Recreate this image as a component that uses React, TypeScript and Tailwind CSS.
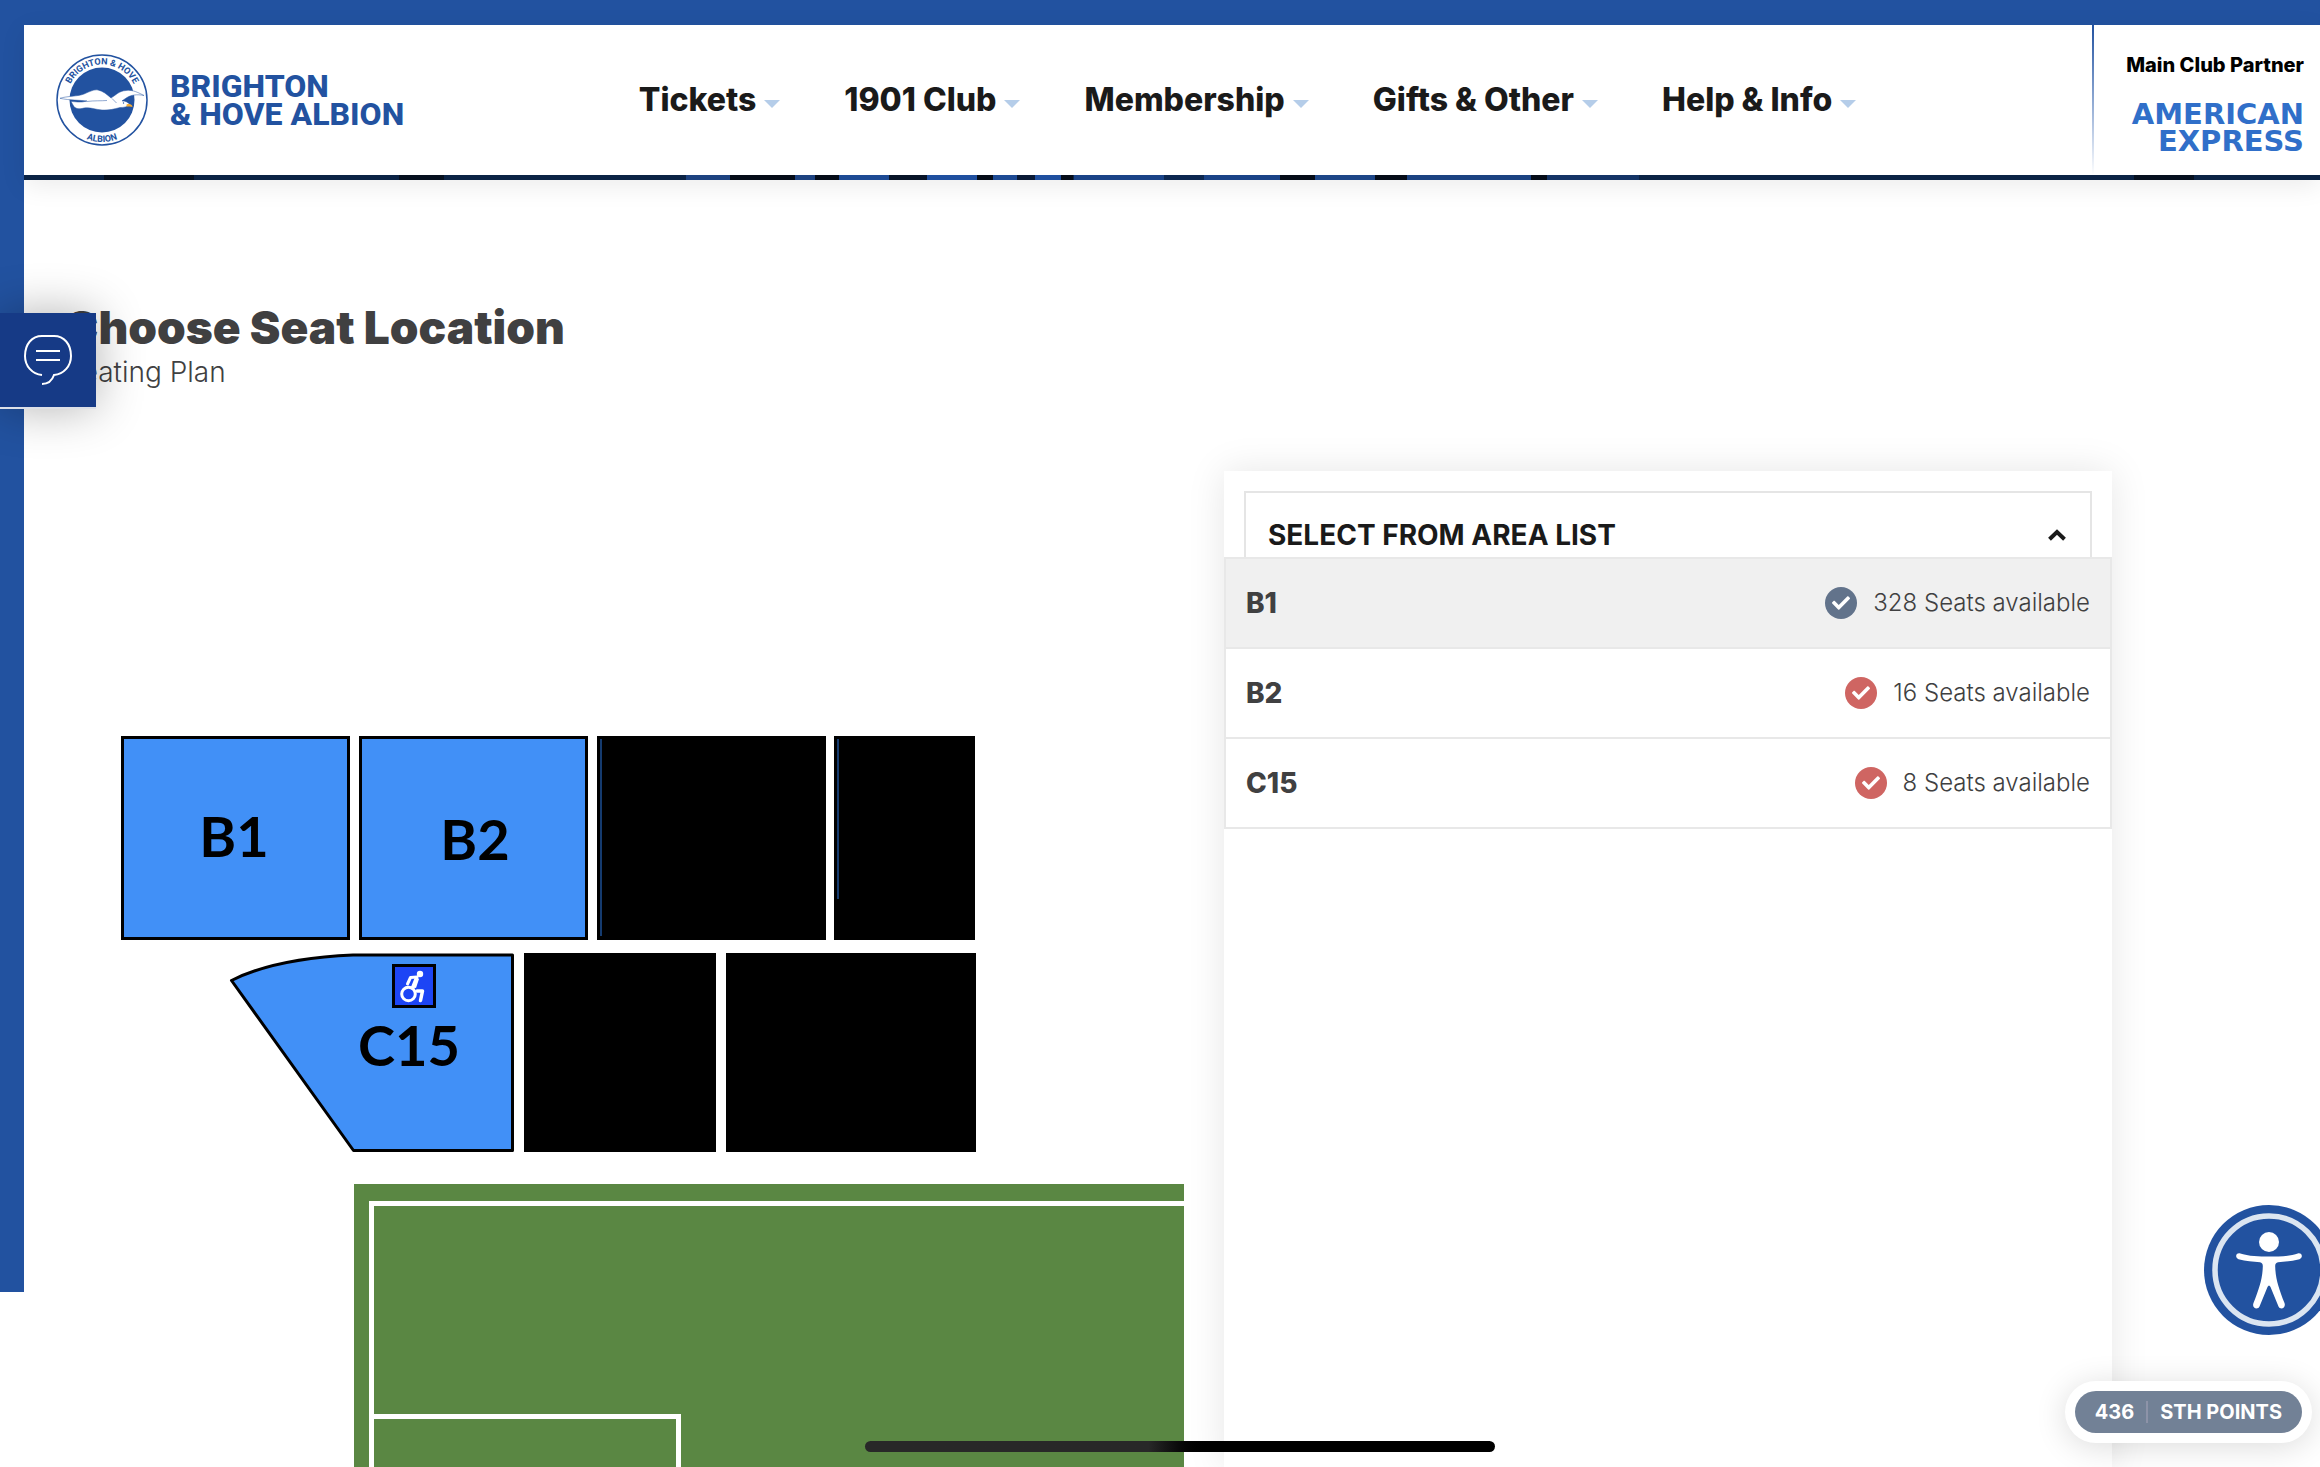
import { useState } from "react";
import { FaCheck } from "react-icons/fa";
import clsx from "clsx";

const NAV = ["Tickets", "1901 Club", "Membership", "Gifts & Other", "Help & Info"];

const AREAS = [
  { id: "B1", seats: 328, low: false },
  { id: "B2", seats: 16, low: true },
  { id: "C15", seats: 8, low: true }
];

// [x, width, fill] patches of the hero photo that show under the header
const HERO: [number, number, string][] = [
  [80, 90, "#06101f"],
  [375, 45, "#06101f"],
  [662, 44, "#1d4280"],
  [706, 65, "#050c18"],
  [771, 20, "#1d4280"],
  [791, 24, "#050c18"],
  [815, 50, "#1d4a94"],
  [865, 38, "#081428"],
  [903, 50, "#1f4f9f"],
  [953, 16, "#050c18"],
  [969, 24, "#1d4a94"],
  [993, 18, "#0a1a36"],
  [1011, 26, "#1f4f9f"],
  [1037, 12, "#050c18"],
  [1050, 90, "#1a4387"],
  [1140, 40, "#0c2750"],
  [1180, 76, "#1a4387"],
  [1256, 35, "#050c18"],
  [1291, 60, "#1d4687"],
  [1351, 32, "#050c18"],
  [1383, 124, "#1b4281"],
  [1507, 16, "#050c18"],
  [1523, 92, "#143466"],
  [2110, 60, "#06101f"]
];

function Crest() {
  return (
    <svg viewBox="0 0 92 92" className="size-[92px] shrink-0" aria-hidden="true">
      <circle cx="46" cy="46" r="45" fill="#fff" stroke="#2252a0" strokeWidth="1.5" />
      <circle cx="46" cy="46" r="32.5" fill="#2252a0" />
      <path id="crest-top" d="M10.500 46a35.500 35.500 0 0 1 71 0" fill="none" />
      <path id="crest-bottom" d="M4 46a42 42 0 0 0 84 0" fill="none" />
      <text fill="#2252a0" fontFamily="Roboto, sans-serif" fontWeight="700" fontSize="9" textAnchor="middle">
        <textPath href="#crest-top" startOffset="50%">BRIGHTON &amp; HOVE</textPath>
      </text>
      <text fill="#2252a0" fontFamily="Roboto, sans-serif" fontWeight="700" fontSize="9" textAnchor="middle">
        <textPath href="#crest-bottom" startOffset="50%">ALBION</textPath>
      </text>
      <path
        d="M4 44.300C11 42 22 42.500 28 40C34 37.500 38 35.300 42 36C47 37 51 40.500 55 44C60 41 63 37 70 36.500C77 35.500 83 39 88 41.500C81 40 75 41 71 43.500C68 45.500 67 46 66 47C69 46.500 72 48.500 74 50.500C71 53 68 53.500 64 53.500C58 55 53 56.500 46 56C39 55.500 34 53 28 54C23 55.500 19 55 17 51L15 47.500C19 47.500 25 49 31 47C24 46 14 46.500 4 44.300Z"
        fill="#fff"
        stroke="#2252a0"
        strokeWidth=".5"
      />
      <path d="M56 44.500l4.500 4.500M31 47.500c7-1 14-.5 20-1" stroke="#2252a0" strokeWidth=".5" fill="none" />
      <circle cx="67.500" cy="49" r=".7" fill="#2252a0" />
      <path d="M70.500 50.500c3-1 5.500-.5 6 2.500-2-.5-4-.3-6-.6z" fill="#f4ab33" />
    </svg>
  );
}

function Header() {
  return (
    <header className="relative shadow-[0_6px_24px_rgba(0,0,0,0.08)]">
      <div className="flex h-[150px] bg-white">
        <a href="#" className="flex w-[379px] items-center gap-[22px] pl-8 text-[#2252a0]">
          <Crest />
          <span className="whitespace-nowrap font-['Roboto',sans-serif] text-[32px] font-extrabold leading-7">
            BRIGHTON
            <br />& HOVE ALBION
          </span>
        </a>
        <nav className="flex flex-1 items-center justify-center gap-16">
          {NAV.map((n) => (
            <button key={n} className="flex items-center gap-2 whitespace-nowrap text-[32px] font-extrabold text-[#1a1a1a]">
              {n}
              <svg viewBox="0 0 16 8" className="mt-2 h-2 w-4" fill="#b5cde9" aria-hidden="true">
                <path d="M0 0h16L8 8z" />
              </svg>
            </button>
          ))}
        </nav>
        <div className="w-[2px] bg-linear-to-b from-[#2252a0] to-white" />
        <div className="flex w-[226px] flex-col items-end justify-center gap-[22px] pr-4 pt-[6px]">
          <div className="whitespace-nowrap text-xl font-extrabold text-black">Main Club Partner</div>
          <a href="#" className="text-right font-['DejaVu_Sans',sans-serif] text-[29px] font-bold leading-[27px] text-[#306fc9]">
            AMERICAN
            <br />
            EXPRESS
          </a>
        </div>
      </div>
      <svg viewBox="0 0 2296 5" preserveAspectRatio="none" className="block h-[5px] w-full bg-[#0b2345]" aria-hidden="true">
        {HERO.map(([x, w, fill]) => (
          <rect key={x} x={x} width={w} height="5" fill={fill} />
        ))}
      </svg>
    </header>
  );
}

function SeatMap() {
  return (
    <svg viewBox="0 0 1063 731" className="w-full" role="img" aria-label="Seating plan">
      <g fill="#4190f7" stroke="#000" strokeWidth="3">
        <rect x="1.500" y="1.500" width="226" height="201" />
        <rect x="239.500" y="1.500" width="226" height="201" />
        <path d="M110.500 244.500C145 227 188 221 232 219H391.500V414.500H232.500Z" strokeLinejoin="round" />
      </g>
      <g fill="#000">
        <rect x="476" width="229" height="204" />
        <rect x="713" width="141" height="204" />
        <rect x="403" y="217" width="192" height="199" />
        <rect x="605" y="217" width="250" height="199" />
      </g>
      <path d="M480 3v197M717 3v160" stroke="#1d4f94" strokeWidth="1.500" />
      <g fontFamily="Lato, sans-serif" fontWeight="700" fontSize="56" textAnchor="middle">
        <text x="113" y="121">B1</text>
        <text x="354" y="124">B2</text>
        <text x="288" y="330">C15</text>
      </g>
      <g transform="translate(271 228)">
        <rect x="1.500" y="1.500" width="41" height="41" fill="#1d45f5" stroke="#000" strokeWidth="3" />
        <circle cx="28" cy="10" r="3.200" fill="#fff" />
        <path d="M25 13L18.500 13.500 15.500 20M25 14l-4 10" fill="none" stroke="#fff" strokeWidth="3" strokeLinecap="round" strokeLinejoin="round" />
        <path d="M23 13l4 2-3 9-5-1z" fill="#fff" />
        <path d="M25 27h5.500l-2 9.500" fill="none" stroke="#fff" strokeWidth="3.500" strokeLinecap="round" strokeLinejoin="round" />
        <circle cx="16.500" cy="30" r="6.800" fill="none" stroke="#fff" strokeWidth="3" />
      </g>
      <rect x="233" y="448" width="830" height="283" fill="#5a8743" />
      <g fill="#fff">
        <rect x="248" y="465" width="815" height="5" />
        <rect x="248" y="465" width="5" height="266" />
        <rect x="253" y="678" width="306" height="5" />
        <rect x="555" y="678" width="5" height="53" />
      </g>
    </svg>
  );
}

function AreaPanel() {
  const [open, setOpen] = useState(true);
  const [active, setActive] = useState("B1");

  return (
    <section className="relative mr-[208px] w-[888px] shrink-0 bg-white p-5 shadow-[0_0_36px_rgba(0,0,0,0.1)]">
      <button
        onClick={() => setOpen(!open)}
        aria-expanded={open}
        className="flex h-[88px] w-full items-center justify-between border-2 border-[#e5e5e5] pl-[22px] pr-6 text-[28px] font-bold text-[#1a1a1a]"
      >
        SELECT FROM AREA LIST
        <svg viewBox="0 0 18 12" className={clsx("h-3 w-[18px]", !open && "rotate-180")} fill="none" stroke="currentColor" strokeWidth="4" aria-hidden="true">
          <path d="M1.500 10.200L9 3l7.500 7.200" />
        </svg>
      </button>
      {open && (
        <ul className="absolute inset-x-0 top-[86px] divide-y-2 divide-[#e8e8e8] border-2 border-[#e8e8e8] bg-white">
          {AREAS.map((a) => (
            <li key={a.id}>
              <button
                onClick={() => setActive(a.id)}
                className={clsx("flex h-[88px] w-full items-center justify-between px-5 text-[#404041]", active === a.id && "bg-[#f0f0f0]")}
              >
                <span className="text-[28px] font-extrabold">{a.id}</span>
                <span className="flex items-center gap-4 text-2xl font-light">
                  <span className={clsx("flex size-8 items-center justify-center rounded-full text-white", a.low ? "bg-[#cf6562]" : "bg-[#62738b]")}>
                    <FaCheck className="size-[18px]" />
                  </span>
                  {a.seats} Seats available
                </span>
              </button>
            </li>
          ))}
        </ul>
      )}
    </section>
  );
}

function ChatTab() {
  return (
    <button
      aria-label="Chat"
      className="absolute left-0 top-[313px] flex h-24 w-24 items-center justify-center border-b-2 border-[#dcdfe8] bg-[#163a86] shadow-[0_0_48px_rgba(0,0,0,0.3)]"
    >
      <svg viewBox="0 0 48 50" className="h-[50px] w-12" fill="none" stroke="#fff" strokeWidth="2" aria-hidden="true">
        <path d="M18 40C8 39 1 31 1 21C1 9 8 1 18 1H30C40 1 47 9 47 21C47 31 40 39 30 40C28 46 24 49 18 49" />
        <path d="M12 16h24M12 25h24" />
      </svg>
    </button>
  );
}

function AccessibilityButton() {
  return (
    <button aria-label="Accessibility options" className="absolute -right-[14px] bottom-[132px] size-[130px]">
      <svg viewBox="0 0 130 130" className="size-full" aria-hidden="true">
        <circle cx="65" cy="65" r="65" fill="#2252a0" />
        <circle cx="65" cy="65" r="54" fill="none" stroke="#dbe5f1" strokeWidth="5.500" />
        <circle cx="65" cy="37" r="10" fill="#fff" />
        <path
          d="M35.500 48.300C45 51.500 55 51.500 65 51.500S85 51.500 94.500 48.300C98.500 48 99 53 95.500 54.200C88 56 81 56.700 74 57.200C72 57.500 71 59 71.200 61.500C71.500 74 75 84 80.500 98C82.300 103 76.500 105.500 74.500 101.500L66.500 82C65.500 80 64.500 80 63.500 82L55.500 101.500C53.500 105.500 47.500 103 49.500 98C55 84 58.500 74 58.800 61.500C59 59 58 57.500 56 57.200C49 56.700 42 56 34.500 54.200C31 53 31.500 48 35.500 48.300Z"
          fill="#fff"
        />
      </svg>
    </button>
  );
}

export default function App() {
  return (
    <div className="relative flex h-screen flex-col overflow-hidden bg-white font-['Inter',sans-serif]">
      <div className="h-[25px] shrink-0 bg-[#2252a0]" />
      <div className="flex min-h-0 flex-1">
        <aside className="h-[1267px] w-6 shrink-0 bg-[#2252a0]" />
        <div className="flex min-w-0 flex-1 flex-col">
          <Header />
          <main className="flex min-h-0 flex-1 flex-col">
            <div className="h-[291px] shrink-0 pl-10 pt-[122px] text-[#404041]">
              <h1 className="text-[46px] font-black leading-[50px]">Choose Seat Location</h1>
              <p className="text-[28px] font-light leading-10">Seating Plan</p>
            </div>
            <div className="flex min-h-0 flex-1">
              <div className="flex-1 pl-[97px] pr-10 pt-[265px]">
                <SeatMap />
              </div>
              <AreaPanel />
            </div>
          </main>
        </div>
      </div>

      <ChatTab />
      <AccessibilityButton />
      <div className="absolute bottom-6 right-2 rounded-full bg-white p-[10px] shadow-[0_4px_32px_rgba(0,0,0,0.14)]">
        <button className="flex h-[42px] items-center whitespace-nowrap rounded-full bg-[#728196] px-5 text-xl font-bold text-white">
          436
          <span className="mx-3 h-[22px] w-[2px] bg-[#8d93a8]" />
          STH POINTS
        </button>
      </div>
      {/* home indicator */}
      <div className="absolute bottom-[15px] left-[865px] h-[11px] w-[630px] rounded-full bg-linear-to-r from-[#282828] from-45% to-black to-55%" />
    </div>
  );
}
